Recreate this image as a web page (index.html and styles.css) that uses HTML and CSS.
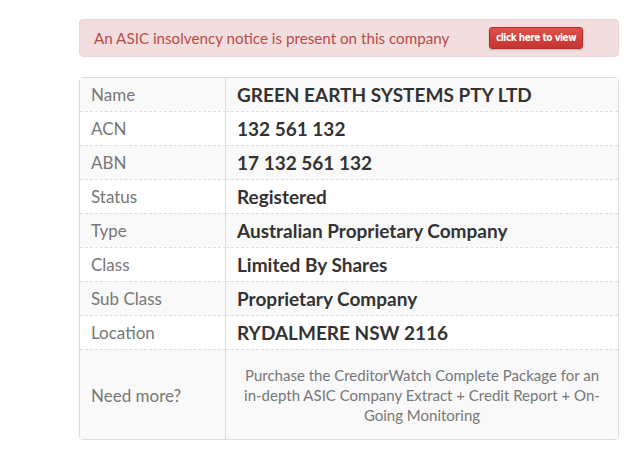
FILE: index.html
```html
<!DOCTYPE html>
<html lang="en">
<head>
    <meta charset="UTF-8">
    <meta name="viewport" content="width=device-width, initial-scale=1.0">
    <title>Company details</title>
    <link rel="stylesheet" href="styles.css">
</head>
<body>
    <div class="container">
        <div class="alert">
            <span>An ASIC insolvency notice is present on this company</span>
            <a class="btn-view" href="#">click here to view</a>
        </div>

        <table class="details">
            <tr><td class="label">Name</td><td class="value">GREEN EARTH SYSTEMS PTY LTD</td></tr>
            <tr><td class="label">ACN</td><td class="value">132 561 132</td></tr>
            <tr><td class="label">ABN</td><td class="value">17 132 561 132</td></tr>
            <tr><td class="label">Status</td><td class="value">Registered</td></tr>
            <tr><td class="label">Type</td><td class="value">Australian Proprietary Company</td></tr>
            <tr><td class="label">Class</td><td class="value">Limited By Shares</td></tr>
            <tr><td class="label">Sub Class</td><td class="value">Proprietary Company</td></tr>
            <tr><td class="label">Location</td><td class="value">RYDALMERE NSW 2116</td></tr>
            <tr class="more">
                <td class="label">Need more?</td>
                <td class="promo">Purchase the CreditorWatch Complete Package for an in-depth ASIC Company Extract + Credit Report + On-Going Monitoring</td>
            </tr>
        </table>
    </div>
</body>
</html>
```

FILE: styles.css
```css
body {
    font-family: "Lato", "Liberation Sans", sans-serif;
    background: #ffffff;
    margin: 0;
    padding: 0;
}

.container {
    width: 540px;
    margin-left: 79px;
    padding-top: 19px;
}

.alert {
    display: flex;
    align-items: center;
    justify-content: space-between;
    height: 36px;
    padding: 0 35px 0 14px;
    background: #f2dede;
    border: 1px solid #eed3d7;
    border-radius: 4px;
    color: #b94a48;
    font-size: 15.2px;
}

.btn-view {
    display: block;
    padding: 0 6px;
    height: 20px;
    line-height: 20px;
    font-family: "DejaVu Sans Condensed", "DejaVu Sans", sans-serif;
    font-size: 10px;
    font-weight: bold;
    letter-spacing: -0.5px;
    color: #ffffff;
    text-decoration: none;
    background: linear-gradient(#e0504c, #c43430);
    border: 1px solid #b52b27;
    border-radius: 3px;
    box-shadow: 0 1px 2px rgba(0, 0, 0, 0.2);
}

.details {
    width: 540px;
    margin-top: 20px;
    border-collapse: separate;
    border-spacing: 0;
    border: 1px solid #dddddd;
    border-radius: 4px;
    box-shadow: 0 1px 2px rgba(0, 0, 0, 0.06);
}

.details td {
    padding: 5px 11px;
    line-height: 23px;
    border-top: 1px dashed #dddddd;
    vertical-align: middle;
}

.details tr:first-child td {
    border-top: none;
}

.details tr:nth-child(odd) td {
    background: #f9f9f9;
}

.label {
    width: 123px;
    font-size: 17px;
    color: #777777;
    border-right: 1px solid #dddddd;
}

.value {
    font-size: 19px;
    font-weight: bold;
    color: #333333;
}

.details .more td {
    padding-top: 15px;
    padding-bottom: 14px;
}

.details .promo {
    font-size: 15px;
    line-height: 20px;
    color: #777777;
    text-align: center;
    padding-left: 12px;
    padding-right: 12px;
}
```
